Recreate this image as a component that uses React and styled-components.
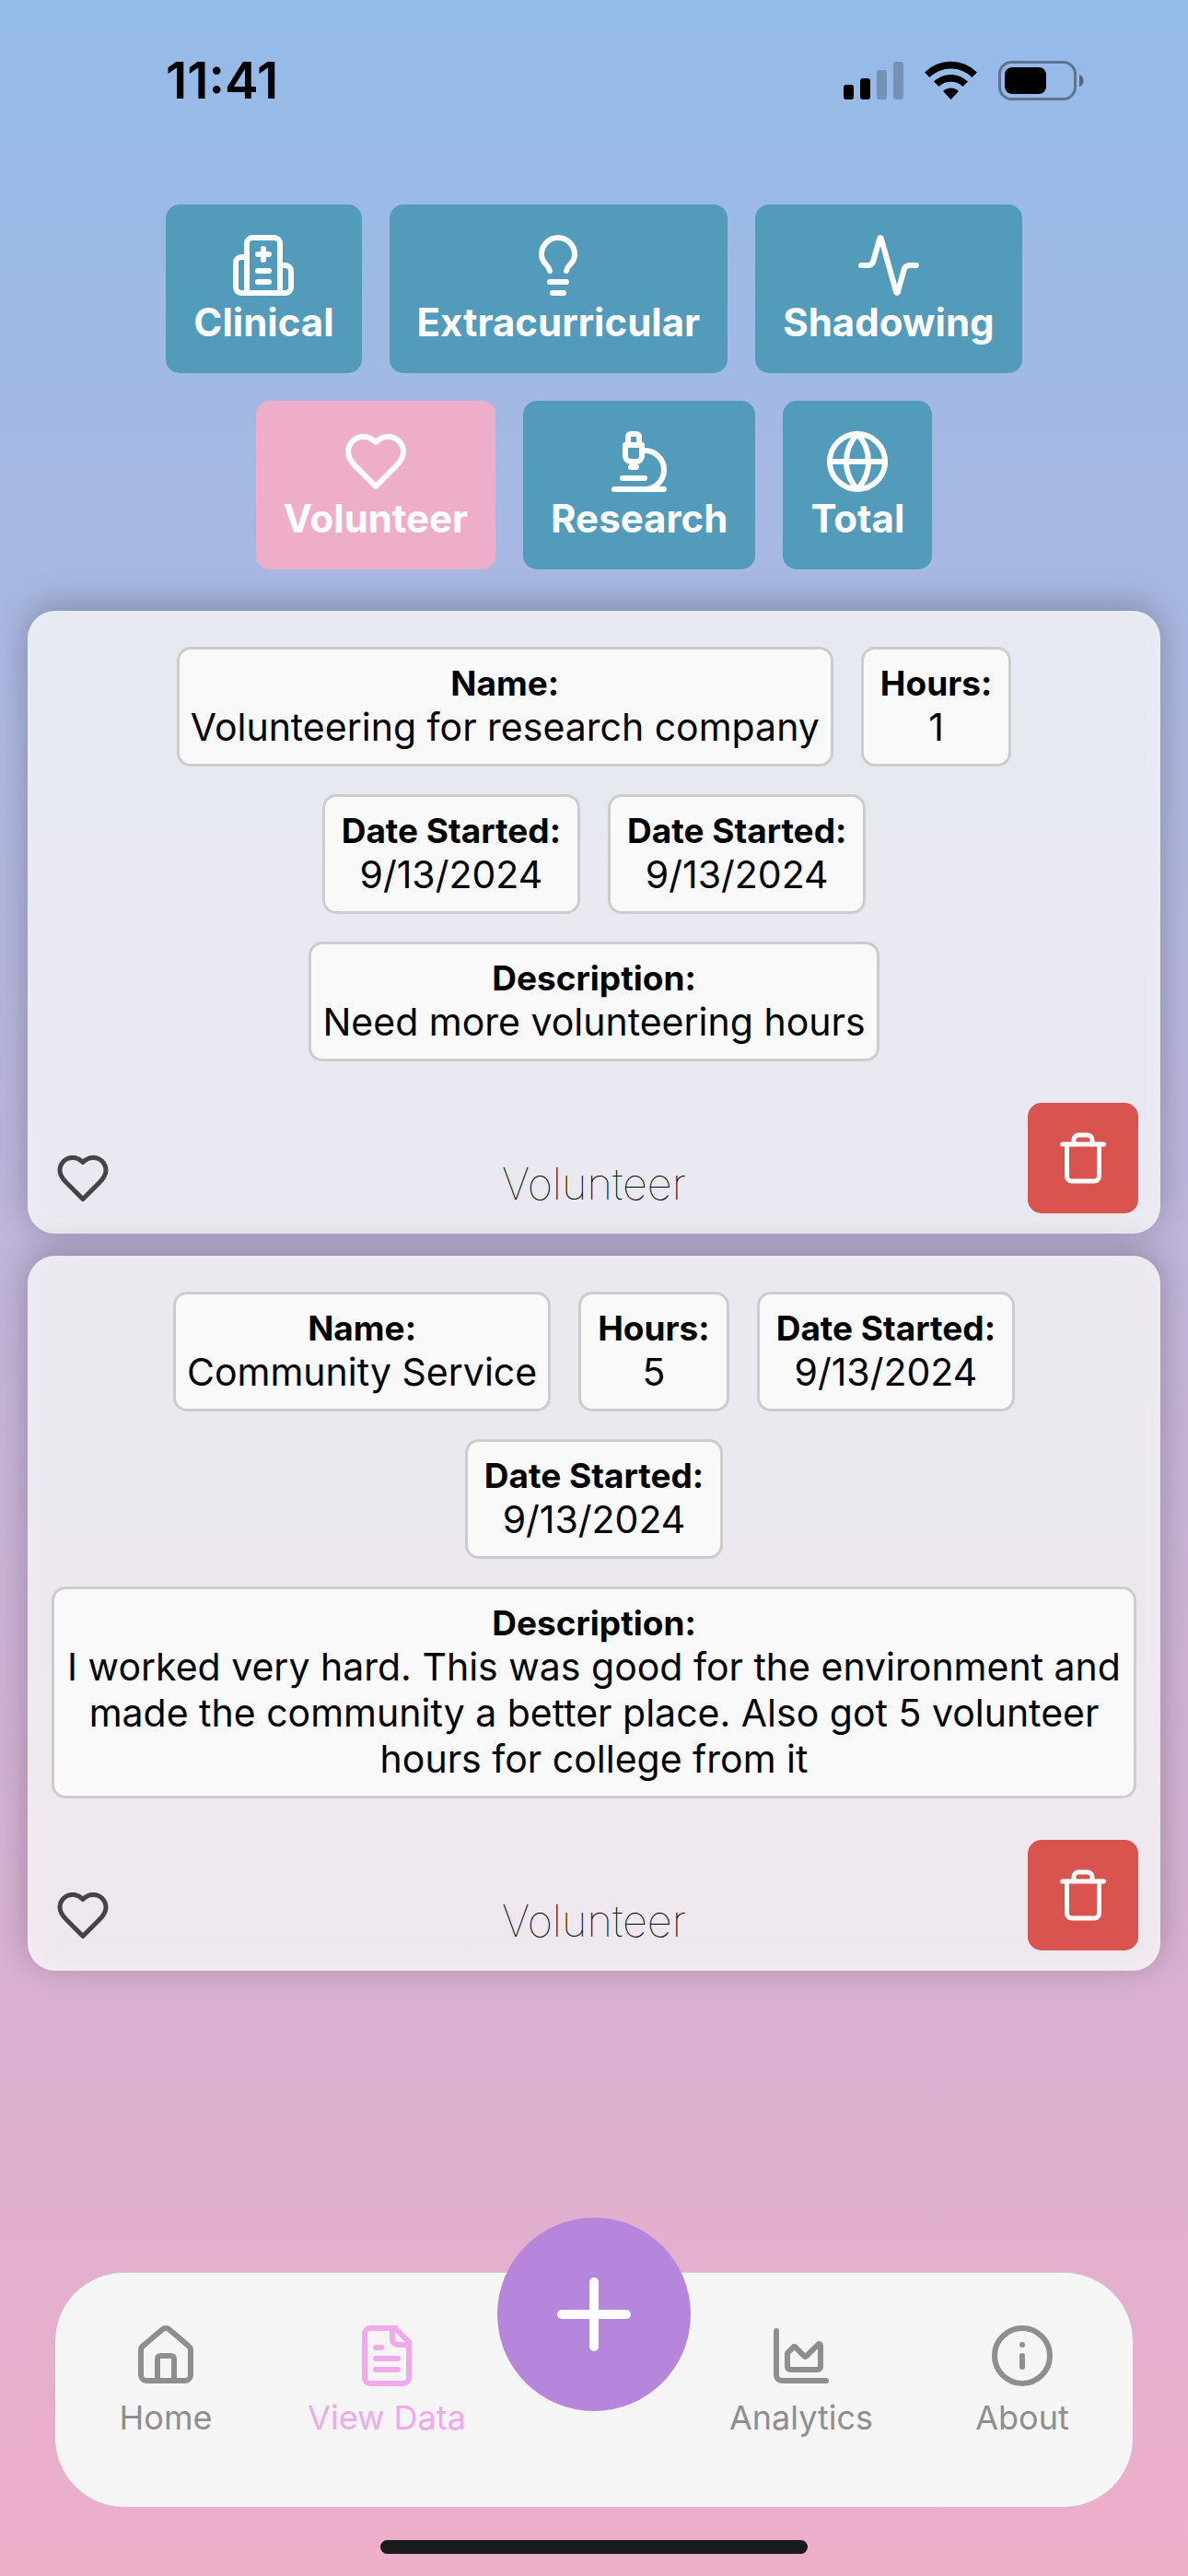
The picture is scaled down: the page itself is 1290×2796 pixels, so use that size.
import React, { useState } from "react";
import styled, { createGlobalStyle } from "styled-components";

const GlobalStyle = createGlobalStyle`
  *, *::before, *::after { box-sizing: border-box; }
  body {
    margin: 0;
    font-family: Inter, "Liberation Sans", sans-serif;
    color: #000;
  }
  button { font: inherit; border: 0; cursor: pointer; }
  dl, dt, dd, p, ul { margin: 0; padding: 0; }
`;

const Screen = styled.div`
  min-height: 100vh;
  display: flex;
  flex-direction: column;
  background: linear-gradient(180deg, #94bbe9 0%, #eeaeca 100%);
`;

const StatusBar = styled.header`
  display: flex;
  align-items: center;
  justify-content: space-between;
  height: 174px;
  padding: 0 113px 0 180px;
`;

const Clock = styled.time`
  font-size: 55px;
  font-weight: 600;
  line-height: 60px;
`;

const StatusIcons = styled.div`
  display: flex;
  align-items: center;
  gap: 23px;
`;

const Content = styled.main`
  flex: 1;
  display: flex;
  flex-direction: column;
  gap: 45px;
  padding: 48px 30px;
`;

const Filters = styled.nav`
  display: flex;
  flex-wrap: wrap;
  justify-content: center;
  gap: 30px;
  padding: 0 30px;
`;

const FilterButton = styled.button`
  display: flex;
  flex-direction: column;
  align-items: center;
  padding: 30px;
  border-radius: 15px;
  background: ${(p) => (p.$active ? "#eeaeca" : "#529bbb")};
  color: #fff;
  font-size: 42px;
  font-weight: 700;
  line-height: 51px;
`;

const CardList = styled.div`
  display: flex;
  flex-direction: column;
  gap: 24px;
`;

const Card = styled.article`
  display: flex;
  flex-direction: column;
  gap: 45px;
  padding: 39px 24px 22px;
  border-radius: 30px;
  background: rgba(245, 245, 245, 0.8);
  box-shadow:
    0 -6px 36px rgba(0, 0, 0, 0.25),
    inset 0 -6px 30px rgba(255, 255, 255, 0.25);
`;

const Fields = styled.dl`
  display: flex;
  flex-wrap: wrap;
  justify-content: center;
  gap: 30px;
  padding: 0 2px;
`;

const Field = styled.div`
  padding: 15px 12px;
  border: 3px solid #ccc;
  border-radius: 15px;
  background: #f9f9f9;
  text-align: center;
`;

const FieldLabel = styled.dt`
  padding: 0 6px;
  font-size: 37px;
  font-weight: 700;
  line-height: 44px;
`;

const FieldValue = styled.dd`
  font-size: 41px;
  line-height: 50px;
`;

const CardFooter = styled.footer`
  display: grid;
  grid-template-columns: 1fr auto 1fr;
  align-items: end;
`;

const CategoryMark = styled.span`
  display: flex;
  padding: 8px 6px;
  color: #444;
`;

const CategoryName = styled.p`
  font-size: 47px;
  font-weight: 100;
  line-height: 64px;
`;

const DeleteButton = styled.button`
  justify-self: end;
  display: flex;
  align-items: center;
  justify-content: center;
  width: 120px;
  height: 120px;
  padding: 0;
  border-radius: 15px;
  background: #d9534f;
  color: #fff;
`;

const TabBar = styled.nav`
  display: flex;
  align-items: flex-start;
  height: 255px;
  margin: 0 60px;
  border-top: 1px solid #d0d0d0;
  border-radius: 75px;
  background: #f5f5f5;
`;

const Tab = styled.a`
  flex: 1;
  display: flex;
  flex-direction: column;
  align-items: center;
  gap: 9px;
  padding-top: 54px;
  color: ${(p) => (p.$active ? "#f0aaec" : "#8e8e8f")};
  font-size: 36px;
  line-height: 44px;
  text-decoration: none;
`;

const AddButton = styled.button`
  display: flex;
  align-items: center;
  justify-content: center;
  width: 210px;
  height: 210px;
  margin-top: -60px;
  padding: 0;
  border-radius: 50%;
  background: #b685dc;
  color: #fff;
`;

const HomeIndicator = styled.div`
  align-self: center;
  width: 36%;
  height: 15px;
  margin: 36px 0 24px;
  border-radius: 8px;
  background: #1a1a1a;
`;

const icons = {
  hospital: [
    "M12 6v4", "M14 14h-4", "M14 18h-4", "M14 8h-4",
    "M18 12h2a2 2 0 0 1 2 2v6a2 2 0 0 1-2 2H4a2 2 0 0 1-2-2v-9a2 2 0 0 1 2-2h2",
    "M18 22V4a2 2 0 0 0-2-2H8a2 2 0 0 0-2 2v18",
  ],
  bulb: [
    "M15 14c.2-1 .7-1.7 1.5-2.5 1-.9 1.5-2.2 1.5-3.5A6 6 0 0 0 6 8c0 1 .2 2.2 1.5 3.5.7.7 1.3 1.5 1.5 2.5",
    "M9 18h6", "M10 22h4",
  ],
  activity: [
    "M22 12h-2.48a2 2 0 0 0-1.93 1.46l-2.35 8.36a.25.25 0 0 1-.48 0L9.24 2.18a.25.25 0 0 0-.48 0l-2.35 8.36A2 2 0 0 1 4.49 12H2",
  ],
  heart: [
    "M19 14c1.49-1.46 3-3.21 3-5.5A5.5 5.5 0 0 0 16.5 3c-1.76 0-3 .5-4.5 2-1.5-1.5-2.74-2-4.5-2A5.5 5.5 0 0 0 2 8.5c0 2.3 1.5 4.05 3 5.5l7 7Z",
  ],
  microscope: [
    "M6 18h8", "M3 22h18", "M14 22a7 7 0 1 0 0-14h-1", "M9 14h2",
    "M9 12a2 2 0 0 1-2-2V6h6v4a2 2 0 0 1-2 2Z",
    "M12 6V3a1 1 0 0 0-1-1H9a1 1 0 0 0-1 1v3",
  ],
  globe: [
    "M22 12a10 10 0 1 1-20 0a10 10 0 1 1 20 0",
    "M12 2a14.5 14.5 0 0 0 0 20 14.5 14.5 0 0 0 0-20", "M2 12h20",
  ],
  trash: [
    "M3 6h18", "M19 6v14c0 1-1 2-2 2H7c-1 0-2-1-2-2V6",
    "M8 6V4c0-1 1-2 2-2h4c1 0 2 1 2 2v2",
  ],
  house: [
    "M15 21v-8a1 1 0 0 0-1-1h-4a1 1 0 0 0-1 1v8",
    "M3 10a2 2 0 0 1 .709-1.528l7-5.999a2 2 0 0 1 2.582 0l7 5.999A2 2 0 0 1 21 10v9a2 2 0 0 1-2 2H5a2 2 0 0 1-2-2z",
  ],
  file: [
    "M15 2H6a2 2 0 0 0-2 2v16a2 2 0 0 0 2 2h12a2 2 0 0 0 2-2V7Z",
    "M14 2v4a2 2 0 0 0 2 2h4", "M10 9H8", "M16 13H8", "M16 17H8",
  ],
  chart: [
    "M3 3v16a2 2 0 0 0 2 2h16",
    "M7 11.207a.5.5 0 0 1 .146-.353l2-2a.5.5 0 0 1 .708 0l3.292 3.292a.5.5 0 0 0 .708 0l4.292-4.292a.5.5 0 0 1 .854.353V16a1 1 0 0 1-1 1H8a1 1 0 0 1-1-1z",
  ],
  info: ["M22 12a10 10 0 1 1-20 0a10 10 0 1 1 20 0", "M12 16v-4", "M12 8h.01"],
  plus: ["M5 12h14", "M12 5v14"],
};

function Icon({ name, size = 72 }) {
  return (
    <svg
      width={size}
      height={size}
      viewBox="0 0 24 24"
      fill="none"
      stroke="currentColor"
      strokeWidth="2"
      strokeLinecap="round"
      strokeLinejoin="round"
      aria-hidden="true"
    >
      {icons[name].map((d) => (
        <path key={d} d={d} />
      ))}
    </svg>
  );
}

function SignalIcon() {
  return (
    <svg width="65" height="43" viewBox="0 0 65 43" aria-hidden="true">
      <rect x="0" y="26" width="11" height="16" rx="3" />
      <rect x="18" y="19" width="11" height="23" rx="3" />
      <rect x="36" y="10" width="11" height="32" rx="3" opacity="0.22" />
      <rect x="54" y="1" width="11" height="41" rx="3" opacity="0.22" />
    </svg>
  );
}

function WifiIcon() {
  return (
    <svg width="57" height="43" viewBox="0 0 57 43" aria-hidden="true">
      <path d="M0 12.5A40.500 40.500 0 0 1 57 12.500L51.600 18A33 33 0 0 0 5.400 18Z" />
      <path d="M10 22.500A26.500 26.500 0 0 1 47 22.500L41.600 28A19 19 0 0 0 15.400 28Z" />
      <path d="M20 33A12 12 0 0 1 37 33L28.500 42Z" />
    </svg>
  );
}

function BatteryIcon() {
  return (
    <svg width="93" height="43" viewBox="0 0 93 43" aria-hidden="true">
      <rect x="1.500" y="1.500" width="82" height="40" rx="13" fill="none" stroke="#000" strokeWidth="3" opacity="0.38" />
      <rect x="7" y="7" width="45" height="29" rx="8" />
      <path d="M88 15c6 2 6 11 0 13z" opacity="0.45" />
    </svg>
  );
}

const filters = [
  { label: "Clinical", icon: "hospital" },
  { label: "Extracurricular", icon: "bulb" },
  { label: "Shadowing", icon: "activity" },
  { label: "Volunteer", icon: "heart" },
  { label: "Research", icon: "microscope" },
  { label: "Total", icon: "globe" },
];

const entries = [
  [
    ["Name:", "Volunteering for research company"],
    ["Hours:", "1"],
    ["Date Started:", "9/13/2024"],
    ["Date Started:", "9/13/2024"],
    ["Description:", "Need more volunteering hours"],
  ],
  [
    ["Name:", "Community Service"],
    ["Hours:", "5"],
    ["Date Started:", "9/13/2024"],
    ["Date Started:", "9/13/2024"],
    [
      "Description:",
      "I worked very hard. This was good for the environment and made the community a better place. Also got 5 volunteer hours for college from it",
    ],
  ],
];

export default function App() {
  const [category, setCategory] = useState("Volunteer");

  return (
    <Screen>
      <GlobalStyle />
      <StatusBar>
        <Clock>11:41</Clock>
        <StatusIcons>
          <SignalIcon />
          <WifiIcon />
          <BatteryIcon />
        </StatusIcons>
      </StatusBar>

      <Content>
        <Filters>
          {filters.map((f) => (
            <FilterButton
              key={f.label}
              type="button"
              $active={f.label === category}
              onClick={() => setCategory(f.label)}
            >
              <Icon name={f.icon} />
              {f.label}
            </FilterButton>
          ))}
        </Filters>

        <CardList>
          {entries.map((fields, i) => (
            <Card key={i}>
              <Fields>
                {fields.map(([label, value], j) => (
                  <Field key={j}>
                    <FieldLabel>{label}</FieldLabel>
                    <FieldValue>{value}</FieldValue>
                  </Field>
                ))}
              </Fields>
              <CardFooter>
                <CategoryMark>
                  <Icon name="heart" size={60} />
                </CategoryMark>
                <CategoryName>Volunteer</CategoryName>
                <DeleteButton type="button" aria-label="Delete">
                  <Icon name="trash" size={60} />
                </DeleteButton>
              </CardFooter>
            </Card>
          ))}
        </CardList>
      </Content>

      <TabBar>
        <Tab href="#home">
          <Icon name="house" />
          Home
        </Tab>
        <Tab href="#data" $active>
          <Icon name="file" />
          View Data
        </Tab>
        <AddButton type="button" aria-label="Add">
          <Icon name="plus" size={120} />
        </AddButton>
        <Tab href="#analytics">
          <Icon name="chart" />
          Analytics
        </Tab>
        <Tab href="#about">
          <Icon name="info" />
          About
        </Tab>
      </TabBar>
      <HomeIndicator />
    </Screen>
  );
}
